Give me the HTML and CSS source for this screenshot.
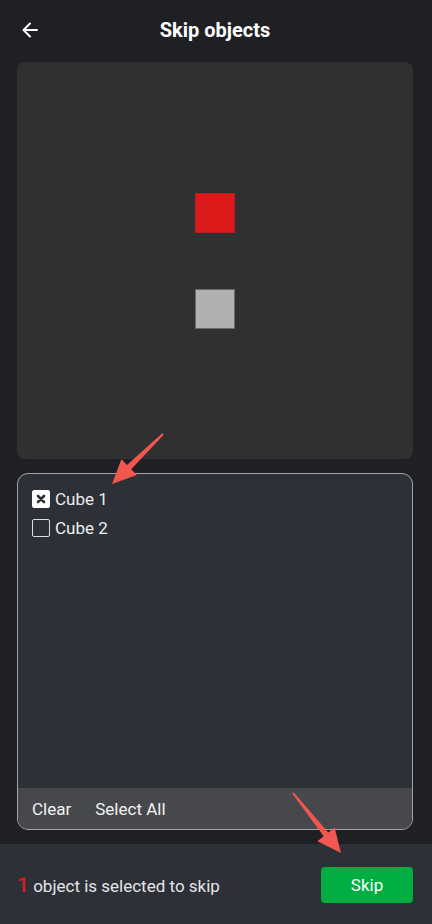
FILE: index.html
```html
<!DOCTYPE html>
<html lang="en">
<head>
  <meta charset="UTF-8">
  <title>Skip objects</title>
  <meta name="viewport" content="width=device-width, initial-scale=1.0">
  <link rel="stylesheet" href="styles.css">
</head>
<body>
  <div class="page">
    <header class="top">
      <svg class="back" width="18" height="18" viewBox="0 0 18 18">
        <path d="M16 9H2.5M9 2.5L2.5 9L9 15.5" fill="none" stroke="#fff" stroke-width="2" stroke-linecap="round" stroke-linejoin="round"/>
      </svg>
      <div class="title">Skip objects</div>
    </header>

    <div class="content">
      <div class="preview">
        <div class="cube red"></div>
        <div class="cube gray"></div>
      </div>

      <div class="list">
        <div class="items">
          <div class="item">
            <span class="check checked">
              <svg width="10" height="10" viewBox="0 0 10 10"><path d="M2 2L8 8M8 2L2 8" stroke="#2e3038" stroke-width="2.6" stroke-linecap="round"/></svg>
            </span>
            <span>Cube 1</span>
          </div>
          <div class="item">
            <span class="check"></span>
            <span>Cube 2</span>
          </div>
        </div>
        <div class="list-bar">
          <span>Clear</span>
          <span>Select All</span>
        </div>
      </div>
    </div>

    <footer class="bottom">
      <div class="status"><span class="count">1</span> object is selected to skip</div>
      <button class="skip">Skip</button>
    </footer>

    <!-- стрелки-аннотации поверх скриншота -->
    <svg class="marks" width="432" height="924" viewBox="0 0 432 924">
      <polygon fill="#f2574f" points="163.7,434.7 131.2,469.3 136.8,475.1 112,484 121.4,459.3 127,465.1 162.3,433.3"/>
      <polygon fill="#f2574f" points="292.2,793.6 323.7,836.2 317.4,841.2 341,853 334.6,827.4 328.3,832.4 293.8,792.4"/>
    </svg>
  </div>
</body>
</html>
```

FILE: styles.css
```css
html, body {
  margin: 0;
  background: #1e2024;
  font-family: Roboto, 'Noto Sans', Arial, sans-serif;
  color: #eceef0;
}

.page {
  position: relative;
  width: 432px;
  height: 924px;
  display: flex;
  flex-direction: column;
  overflow: hidden;
}

.top {
  height: 60px;
  display: flex;
  align-items: center;
  justify-content: center;
  position: relative;
}

.back {
  position: absolute;
  left: 21px;
  top: 21px;
}

.title {
  font-size: 20px;
  font-weight: bold;
  color: #fff;
  margin-left: -2px;
}

.content {
  padding: 2px 19px 14px 17px;
  display: flex;
  flex-direction: column;
  gap: 14px;
}

.preview {
  height: 397px;
  background: #303030;
  border-radius: 8px;
  display: flex;
  flex-direction: column;
  align-items: center;
  justify-content: center;
  gap: 56px;
}

.cube {
  width: 40px;
  height: 40px;
  box-sizing: border-box;
  margin-left: -1px;
}

.cube.red {
  background: #dc1a1a;
  border: 1px solid #b22020;
}

.cube.gray {
  background: #b0b0b0;
  border: 1px solid #6a6a6a;
}

.list {
  height: 357px;
  box-sizing: border-box;
  border: 1px solid #a3a4a8;
  border-radius: 11px;
  background: #2e3038;
  overflow: hidden;
  display: flex;
  flex-direction: column;
}

.items {
  flex: 1;
  padding: 13px 14px 0;
  display: flex;
  flex-direction: column;
  gap: 5px;
}

.item {
  display: flex;
  align-items: center;
  gap: 5px;
  height: 24px;
  font-size: 17px;
  color: #eceef0;
}

.check {
  width: 18px;
  height: 18px;
  box-sizing: border-box;
  border: 1.5px solid #dcdde0;
  border-radius: 2px;
  display: flex;
  align-items: center;
  justify-content: center;
}

.check.checked {
  background: #fff;
  border-color: #fff;
}

.list-bar {
  height: 41px;
  background: #47484c;
  display: flex;
  align-items: center;
  gap: 24px;
  padding: 0 14px;
  font-size: 17px;
  color: #f2f2f2;
}

.bottom {
  flex: 1;
  background: #2e3038;
  display: flex;
  align-items: center;
  justify-content: space-between;
  padding: 2px 19px 0 17px;
}

.status {
  font-size: 17px;
  color: #e4e5e8;
}

.count {
  color: #d71d1d;
  font-size: 21px;
  font-weight: 500;
}

.skip {
  width: 92px;
  height: 36px;
  border: none;
  border-radius: 4px;
  background: #00ae42;
  color: #fff;
  font-family: inherit;
  font-size: 17px;
}

.marks {
  position: absolute;
  left: 0;
  top: 0;
  pointer-events: none;
}
```
